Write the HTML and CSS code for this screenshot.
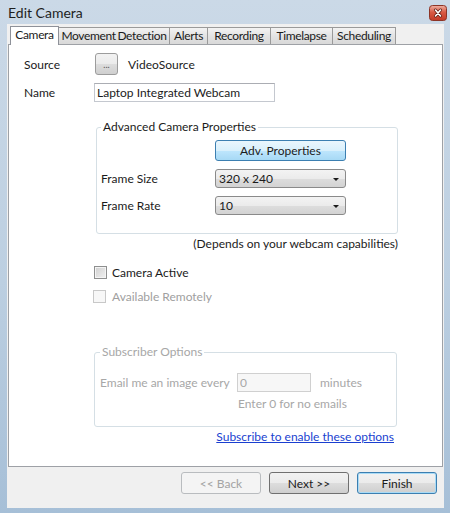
FILE: index.html
```html
<!DOCTYPE html>
<html>
<head>
    <meta charset="utf-8">
    <title>Edit Camera</title>
    <link rel="stylesheet" href="styles.css">
</head>
<body>
    <div class="window">
        <div class="titlebar">
            <span class="title">Edit Camera</span>
            <svg class="close" width="18" height="16" viewBox="0 0 18 16">
                <defs>
                    <linearGradient id="close-bg" x1="0" y1="0" x2="0" y2="1">
                        <stop offset="0" stop-color="#eeb1a4"/>
                        <stop offset="0.45" stop-color="#d85a44"/>
                        <stop offset="1" stop-color="#c33a26"/>
                    </linearGradient>
                </defs>
                <rect x="0.5" y="0.5" width="17" height="15" rx="3" fill="url(#close-bg)" stroke="#8c3426"/>
                <path d="M6.5 5l5 6M11.5 5l-5 6" stroke="#5e1a10" stroke-width="3" stroke-linecap="round"/>
                <path d="M6.5 5l5 6M11.5 5l-5 6" stroke="#ffffff" stroke-width="1.6" stroke-linecap="round"/>
            </svg>
        </div>

        <div class="client">
            <ul class="tabs">
                <li class="tab active">Camera</li>
                <li class="tab">Movement Detection</li>
                <li class="tab">Alerts</li>
                <li class="tab">Recording</li>
                <li class="tab">Timelapse</li>
                <li class="tab">Scheduling</li>
            </ul>

            <div class="page">
                <div class="fields">
                    <span class="label">Source</span>
                    <div class="source">
                        <button class="btn btn-browse">...</button>
                        <span>VideoSource</span>
                    </div>
                    <span class="label">Name</span>
                    <input class="textbox name-box" type="text" value="Laptop Integrated Webcam">
                </div>

                <div class="section adv">
                    <fieldset class="group">
                        <legend>Advanced Camera Properties</legend>
                        <div class="group-grid">
                            <span></span>
                            <button class="btn btn-hot">Adv. Properties</button>
                            <span class="label">Frame Size</span>
                            <div class="combo"><span>320 x 240</span><i class="arrow"></i></div>
                            <span class="label">Frame Rate</span>
                            <div class="combo"><span>10</span><i class="arrow"></i></div>
                        </div>
                    </fieldset>
                    <p class="note">(Depends on your webcam capabilities)</p>
                </div>

                <div class="checks">
                    <label class="check"><input type="checkbox"><span>Camera Active</span></label>
                    <label class="check disabled"><input type="checkbox" disabled><span>Available Remotely</span></label>
                </div>

                <div class="section sub">
                    <fieldset class="group disabled">
                        <legend>Subscriber Options</legend>
                        <div class="email-grid">
                            <span>Email me an image every</span>
                            <input class="textbox minutes-box" type="text" value="0" disabled>
                            <span>minutes</span>
                            <span class="hint">Enter 0 for no emails</span>
                        </div>
                    </fieldset>
                    <p class="link-row"><a class="link" href="#">Subscribe to enable these options</a></p>
                </div>
            </div>

            <div class="footer">
                <button class="btn btn-wide" disabled>&lt;&lt; Back</button>
                <button class="btn btn-wide">Next &gt;&gt;</button>
                <button class="btn btn-wide btn-default">Finish</button>
            </div>
        </div>
    </div>
</body>
</html>
```

FILE: styles.css
```css
body {
    margin: 0;
    font-family: "Lato", "Liberation Sans", sans-serif;
    font-size: 12px;
    color: #1b1b1b;
}
.window {
    width: 450px;
    height: 513px;
    box-sizing: border-box;
    padding: 0 6px 5px 7px;
    display: flex;
    flex-direction: column;
    background: linear-gradient(#cbd9e7, #bccfe1 55%, #a6bfd7);
}
.titlebar {
    height: 24px;
    display: flex;
    align-items: center;
    justify-content: space-between;
    padding: 1px 0 0 1px;
    box-sizing: border-box;
}
.title {
    font-size: 14px;
    color: #1e1e1e;
}
.close {
    display: block;
    margin-right: -3px;
}
.client {
    flex: 1;
    background: #f0f0f0;
    padding: 2px 0 0 1px;
    display: flex;
    flex-direction: column;
}

/* tabs */
.tabs {
    list-style: none;
    margin: 0;
    padding: 0 0 0 2px;
    height: 18px;
    display: flex;
    align-items: flex-end;
}
.tab {
    height: 17px;
    line-height: 16px;
    box-sizing: border-box;
    padding: 0;
    text-align: center;
    white-space: nowrap;
    overflow: hidden;
    letter-spacing: -0.35px;
    word-spacing: -1px;
    border: 1px solid #9a9a9a;
    border-bottom: none;
    margin-left: -1px;
    background: linear-gradient(#f3f3f3, #e3e3e3 50%, #d9d9d9);
}
.tab:nth-child(1) { width: 49px; margin-left: 0; }
.tab:nth-child(2) { width: 112px; }
.tab:nth-child(3) { width: 39px; }
.tab:nth-child(4) { width: 64px; }
.tab:nth-child(5) { width: 63px; }
.tab:nth-child(6) { width: 64px; }
.tab.active {
    height: 19px;
    margin-bottom: -1px;
    background: #fff;
    border-color: #8e9199;
    position: relative;
    z-index: 1;
}
.page {
    height: 423px;
    box-sizing: border-box;
    background: #fff;
    border: 1px solid #9ea1a6;
    margin-right: 1px;
    padding: 8px 0 0 15px;
}

/* top fields */
.fields {
    display: grid;
    grid-template-columns: 71px auto;
    grid-auto-rows: 22px;
    row-gap: 6px;
    align-items: center;
    justify-items: start;
}
.fields .name-box {
    margin-left: -1px;
}
.source {
    display: flex;
    align-items: center;
    gap: 10px;
}
.textbox {
    font: inherit;
    height: 19px;
    box-sizing: border-box;
    border: 1px solid #c4c8cf;
    border-top-color: #abadb3;
    padding: 0 2px;
    color: #1b1b1b;
    outline: none;
}
.name-box {
    width: 181px;
}

/* buttons */
.btn {
    font: inherit;
    color: #1b1b1b;
    height: 22px;
    box-sizing: border-box;
    border: 1px solid #707070;
    border-radius: 3px;
    background: linear-gradient(#f2f2f2, #ebebeb 50%, #dddddd 51%, #cfcfcf);
    padding: 0;
}
.btn-browse {
    width: 23px;
    height: 22px;
    font-size: 9px;
    color: #555;
    border-color: #9c9c9c;
}
.btn-hot {
    width: 131px;
    height: 21px;
    border-color: #3c7fb1;
    background: linear-gradient(#eaf6fd, #d9f0fc 50%, #bee6fd 51%, #a7d9f5);
}
.btn-wide {
    width: 80px;
}
.btn:disabled {
    color: #a3a3a3;
    border-color: #b9bcbf;
    background: #f4f4f4;
}
.btn-default {
    border-color: #3c7fb1;
    box-shadow: inset 0 0 0 1px #a9dbf6;
}

/* group boxes */
.section {
    margin-left: 72px;
    width: 302px;
}
.group {
    margin: 0;
    border: 1px solid #d5dfe5;
    border-radius: 3px;
    padding: 6px 4px 18px 4px;
}
.group legend {
    padding: 0 2px;
    line-height: 14px;
}
.adv {
    margin-top: 17px;
}
.group-grid {
    display: grid;
    grid-template-columns: 114px 131px;
    row-gap: 8px;
    align-items: center;
}
.combo {
    height: 19px;
    box-sizing: border-box;
    border: 1px solid #8a8a8a;
    border-radius: 3px;
    background: linear-gradient(#f3f3f3, #ebebeb 50%, #dddddd 51%, #d3d3d3);
    display: flex;
    align-items: center;
    justify-content: space-between;
    padding: 0 6px 0 3px;
}
.arrow {
    width: 0;
    height: 0;
    border-left: 3px solid transparent;
    border-right: 3px solid transparent;
    border-top: 3px solid #1b1b1b;
    margin-top: 1px;
}
.note {
    margin: 3px 0 0;
    line-height: 14px;
    text-align: right;
}

/* checkboxes */
.checks {
    margin: 13px 0 0 70px;
    display: flex;
    flex-direction: column;
    gap: 8px;
}
.check {
    display: flex;
    align-items: center;
    height: 16px;
    gap: 5px;
}
.check input {
    appearance: none;
    margin: 0;
    width: 13px;
    height: 13px;
    border: 1px solid #8e8f8f;
    background: linear-gradient(135deg, #cfcfcf, #f1f1f1);
    box-shadow: inset 0 0 0 1px #f4f4f4;
}
.check.disabled {
    color: #a0a0a0;
    margin-left: -1px;
    gap: 6px;
}
.check.disabled input {
    border-color: #c8c8c8;
    background: #f7f7f7;
    box-shadow: none;
}

/* subscriber options */
.sub {
    margin: 41px 0 0 70px;
    width: 303px;
}
.group.disabled {
    color: #a7a7a7;
    padding: 14px 4px 15px 5px;
}
.email-grid {
    display: grid;
    grid-template-columns: 137px 83px auto;
    align-items: center;
    row-gap: 4px;
}
.minutes-box {
    width: 74px;
    background: #f7f7f7;
    color: #a7a7a7;
    border-color: #d0d0d0;
}
.hint {
    grid-column: 2 / 4;
    padding-left: 1px;
}
.link-row {
    margin: 3px 0 0;
    padding-right: 3px;
    text-align: right;
    line-height: 14px;
}
.link {
    color: #1a3fd0;
}

/* bottom buttons */
.footer {
    display: flex;
    justify-content: flex-end;
    gap: 8px;
    padding: 5px 7px 0 0;
}
```
